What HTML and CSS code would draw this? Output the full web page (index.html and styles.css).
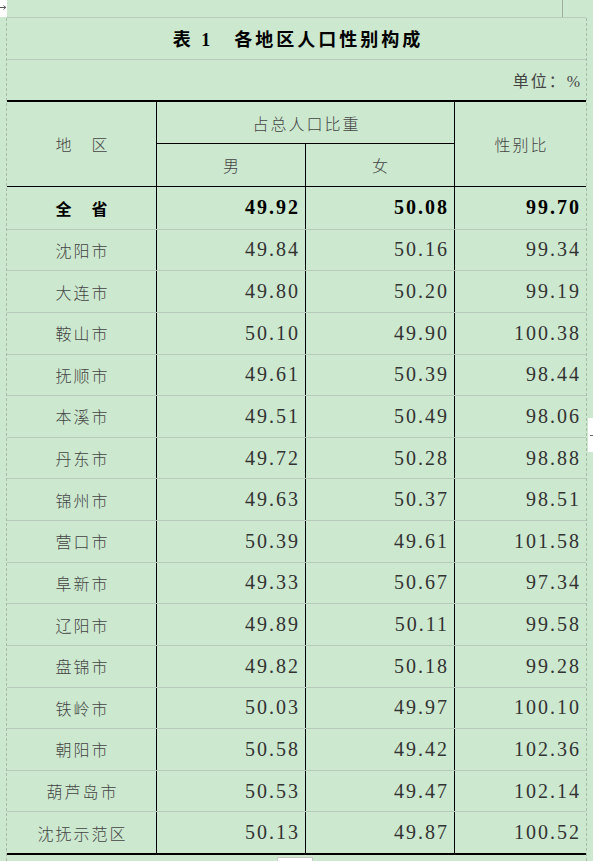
FILE: index.html
```html
<!DOCTYPE html>
<html lang="zh-CN">
<head>
<meta charset="utf-8">
<title>各地区人口性别构成</title>
<link rel="stylesheet" href="styles.css">
</head>
<body>
<div class="sheet">
  <div class="corner">
    <svg class="corner-arrow" width="7" height="17" viewBox="0 0 7 17"><path d="M0 7.5H5.5M3.5 5.5L5.8 7.5L3.5 9.5" fill="none" stroke="#555" stroke-width="1"/></svg>
  </div>
  <div class="topbar"><div class="topbar-cell"></div></div>
  <div class="topright"></div>

  <div class="leftstrip"></div>
  <main class="main">
    <div class="title">表 1　各地区人口性别构成</div>
    <div class="unit">单位：%</div>
    <div class="head">
      <div class="h-region">地　区</div>
      <div class="h-share">占总人口比重</div>
      <div class="h-ratio">性别比</div>
      <div class="h-male">男</div>
      <div class="h-female">女</div>
    </div>
    <div class="body">
      <div class="row bold"><div class="name">全　省</div><div class="num">49.92</div><div class="num">50.08</div><div class="num">99.70</div></div>
      <div class="row"><div class="name">沈阳市</div><div class="num">49.84</div><div class="num">50.16</div><div class="num">99.34</div></div>
      <div class="row"><div class="name">大连市</div><div class="num">49.80</div><div class="num">50.20</div><div class="num">99.19</div></div>
      <div class="row"><div class="name">鞍山市</div><div class="num">50.10</div><div class="num">49.90</div><div class="num">100.38</div></div>
      <div class="row"><div class="name">抚顺市</div><div class="num">49.61</div><div class="num">50.39</div><div class="num">98.44</div></div>
      <div class="row"><div class="name">本溪市</div><div class="num">49.51</div><div class="num">50.49</div><div class="num">98.06</div></div>
      <div class="row"><div class="name">丹东市</div><div class="num">49.72</div><div class="num">50.28</div><div class="num">98.88</div></div>
      <div class="row"><div class="name">锦州市</div><div class="num">49.63</div><div class="num">50.37</div><div class="num">98.51</div></div>
      <div class="row"><div class="name">营口市</div><div class="num">50.39</div><div class="num">49.61</div><div class="num">101.58</div></div>
      <div class="row"><div class="name">阜新市</div><div class="num">49.33</div><div class="num">50.67</div><div class="num">97.34</div></div>
      <div class="row"><div class="name">辽阳市</div><div class="num">49.89</div><div class="num">50.11</div><div class="num">99.58</div></div>
      <div class="row"><div class="name">盘锦市</div><div class="num">49.82</div><div class="num">50.18</div><div class="num">99.28</div></div>
      <div class="row"><div class="name">铁岭市</div><div class="num">50.03</div><div class="num">49.97</div><div class="num">100.10</div></div>
      <div class="row"><div class="name">朝阳市</div><div class="num">50.58</div><div class="num">49.42</div><div class="num">102.36</div></div>
      <div class="row"><div class="name">葫芦岛市</div><div class="num">50.53</div><div class="num">49.47</div><div class="num">102.14</div></div>
      <div class="row"><div class="name">沈抚示范区</div><div class="num">50.13</div><div class="num">49.87</div><div class="num">100.52</div></div>
    </div>
    <div class="tail"><div class="tail-tab"></div></div>
  </main>
  <div class="rightstrip"><div class="sidetab"><div class="sidetab-tick"></div></div></div>
</div>
</body>
</html>
```

FILE: styles.css
```css
html, body {
  margin: 0;
  padding: 0;
}

body {
  background: #cce8cf;
  width: 593px;
  height: 861px;
  overflow: hidden;
}

.sheet {
  display: grid;
  grid-template-columns: 7px 579px 7px;
  grid-template-rows: 18px 843px;
}

.corner {
  background: #ffffff;
  height: 17px;
}

.corner-arrow {
  display: block;
}

.topbar {
  display: flex;
  height: 18px;
  box-sizing: border-box;
  border-bottom: 1px solid #b8cab9;
}

.topbar-cell {
  width: 555px;
  border-right: 1px solid #9fae9f;
}

.topright {
  background: #cce8cf;
}

.leftstrip {
  border-right: 1px dashed #a9baa9;
}

.rightstrip {
  border-left: 1px dashed #a9baa9;
  display: flex;
  flex-direction: column;
  align-items: flex-end;
}

.sidetab {
  margin-top: 400px;
  width: 5px;
  height: 34px;
  background: #ffffff;
  display: flex;
  align-items: center;
  justify-content: flex-end;
}

.sidetab-tick {
  width: 3px;
  height: 1px;
  background: #666;
}

.main {
  display: flex;
  flex-direction: column;
  font-family: "Liberation Serif", "Noto Sans CJK SC", serif;
  color: #333;
}

.title {
  height: 42px;
  box-sizing: border-box;
  border-bottom: 1px solid #b8cab9;
  display: flex;
  align-items: center;
  justify-content: center;
  font-size: 18px;
  font-weight: bold;
  letter-spacing: 3px;
  color: #000;
  white-space: pre;
  padding-left: 3px;
}

.unit {
  height: 41px;
  display: flex;
  align-items: center;
  justify-content: flex-end;
  padding-right: 4px;
  font-size: 16px;
  letter-spacing: 2px;
  color: #444;
}

.head {
  display: grid;
  grid-template-columns: 149px 149px 149px 132px;
  grid-template-rows: 42px 42px;
  border-top: 2px solid #000;
  border-bottom: 1px solid #000;
  font-family: "Noto Sans CJK SC", sans-serif;
  font-size: 16px;
  font-weight: 300;
  letter-spacing: 2px;
  color: #444;
}

.head > div {
  display: flex;
  align-items: center;
  justify-content: center;
  box-sizing: border-box;
  padding-left: 2px;
}

.h-region {
  grid-column: 1;
  grid-row: 1 / 3;
}

.h-share {
  grid-column: 2 / 4;
  grid-row: 1;
  border-left: 1px solid #000;
  border-bottom: 1px solid #000;
}

.h-ratio {
  grid-column: 4;
  grid-row: 1 / 3;
  border-left: 1px solid #000;
}

.h-male {
  grid-column: 2;
  grid-row: 2;
  border-left: 1px solid #000;
}

.h-female {
  grid-column: 3;
  grid-row: 2;
  border-left: 1px solid #000;
}

.body {
  display: grid;
  grid-template-rows: repeat(16, 41.625px);
  border-bottom: 2px solid #000;
}

.row {
  display: grid;
  grid-template-columns: 149px 149px 149px 132px;
  box-sizing: border-box;
  border-top: 1px solid #b8cab9;
}

.row:first-child {
  border-top: 0;
}

.name {
  display: flex;
  align-items: center;
  justify-content: center;
  padding-left: 2px;
  font-family: "Noto Sans CJK SC", sans-serif;
  font-size: 16px;
  font-weight: 300;
  letter-spacing: 2px;
  color: #444;
}

.num {
  display: flex;
  align-items: center;
  justify-content: flex-end;
  box-sizing: border-box;
  border-left: 1px solid #000;
  padding-right: 5px;
  font-size: 20px;
  letter-spacing: 2px;
  color: #333;
}

.bold .name,
.bold .num {
  font-weight: bold;
  color: #000;
}

.tail {
  flex: 1;
  padding-left: 270px;
  padding-top: 2px;
}

.tail-tab {
  width: 34px;
  height: 3px;
  background: #fff;
  border: 1px solid #c9c9c9;
  border-bottom: 0;
}
```
